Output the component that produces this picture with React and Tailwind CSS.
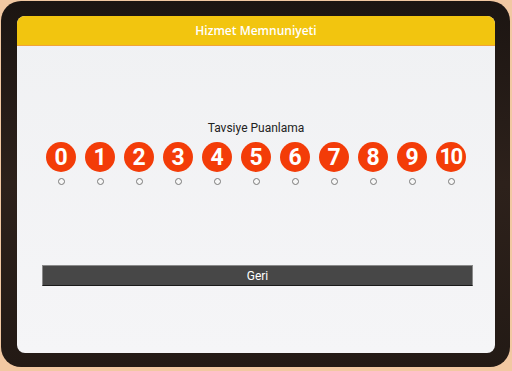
const scores = [0, 1, 2, 3, 4, 5, 6, 7, 8, 9, 10];

const App = () => {
  return (
    <div className="w-[512px] h-[371px] bg-[#f2c8a2] p-px">
      {/* Tablet bezel */}
      <div className="h-[366px] w-[509px] rounded-[20px] bg-gradient-to-b from-[#1c1512] via-[#2d211b] to-[#231a15] pt-[15px] pb-[14px] pl-[16px] pr-[15px]">
        {/* Screen */}
        <div className="h-full overflow-hidden rounded-[8px] bg-gradient-to-b from-[#f0f1f3] to-[#f5f5f7] flex flex-col font-['Roboto',sans-serif]">
          {/* Header */}
          <div className="h-[30px] shrink-0 bg-[#f2c50f] border-b border-[#f1a33a] flex items-center justify-center">
            <span className="font-['Open_Sans',sans-serif] font-semibold text-[12px] text-white">
              Hizmet Memnuniyeti
            </span>
          </div>

          {/* Content */}
          <div className="flex flex-col items-center pt-[74px]">
            <div className="text-[12px] leading-[16px] text-[#222]">Tavsiye Puanlama</div>

            <div className="mt-[6px] flex gap-[9px]">
              {scores.map((s) => (
                <div key={s} className="flex flex-col items-center">
                  <div className="w-[30px] h-[30px] rounded-full bg-[#f33c08] flex items-center justify-center">
                    <span
                      className={`text-white font-bold leading-none ${
                        s === 10 ? 'text-[22px] tracking-[-1.5px] -ml-[1px]' : 'text-[23px]'
                      }`}
                    >
                      {s}
                    </span>
                  </div>
                  <div className="mt-[6px] w-[7px] h-[7px] rounded-full border border-[#7a7a7a] bg-[#f7f7f7]" />
                </div>
              ))}
            </div>
          </div>

          {/* Back button */}
          <div className="mt-[80px] pl-[25px] pr-[22px]">
            <button className="w-full h-[21px] bg-[#474747] border border-[#8a8a8a] border-b-[#1a1a1a] text-white text-[12px] leading-none flex items-center justify-center">
              Geri
            </button>
          </div>
        </div>
      </div>
    </div>
  );
};

export default App;
